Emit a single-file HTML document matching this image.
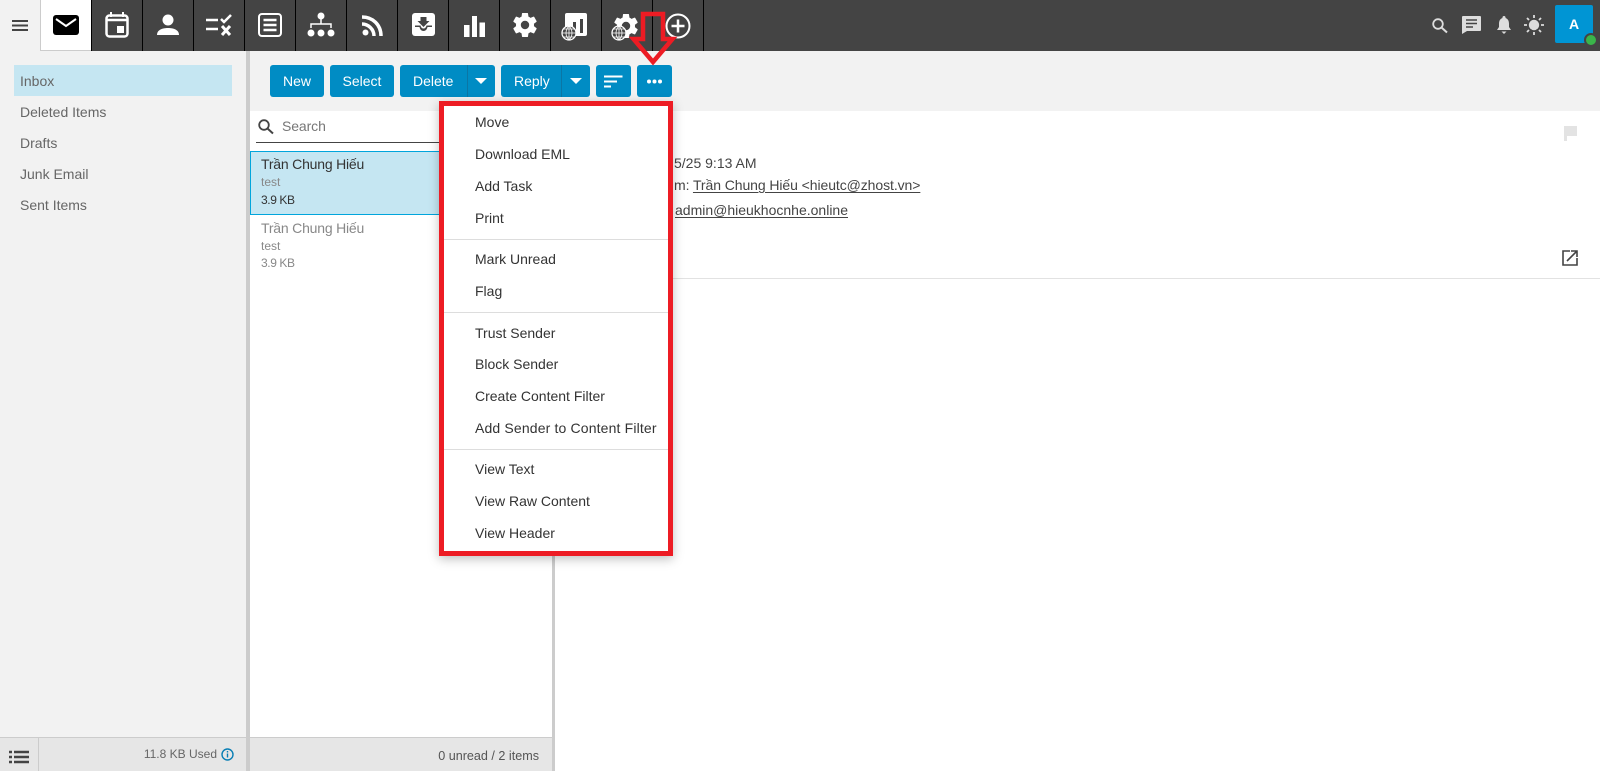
<!DOCTYPE html>
<html lang="vi"><head><meta charset="utf-8"><title>Mail</title>
<style>
html,body{margin:0;padding:0;width:1600px;height:771px;overflow:hidden;background:#f2f2f2}
body{font-family:"Liberation Sans","Noto Sans CJK SC",sans-serif;font-size:14px;color:#444;position:relative}
.a{position:absolute;white-space:nowrap}
.t{position:absolute;white-space:nowrap;height:20px;line-height:20px}
.sep{position:absolute;top:0;width:1px;height:51px;background:#000}
.btn{position:absolute;top:65px;height:32px;line-height:32px;background:#008cc4;color:#fff;border-radius:3px;text-align:center}
.mi{position:absolute;left:475px;height:20px;line-height:20px;color:#333;white-space:nowrap}
.md{position:absolute;left:444px;width:224px;height:1px;background:#ddd}
svg{position:absolute;overflow:visible}
u{text-underline-offset:2px}
</style></head><body>

<!-- top bar -->
<div class="a" style="left:0;top:0;width:1600px;height:51px;background:#444"></div>
<div class="a" style="left:0;top:0;width:40px;height:51px;background:#f2f2f2"></div>
<div class="a" style="left:40px;top:0;width:50px;height:50px;background:#fff;border-left:1px solid #ccc;border-bottom:1px solid #ccc"></div>
<svg style="left:12px;top:20px" width="16" height="11"><path d="M0 1h16M0 5.500h16M0 10h16" stroke="#444" stroke-width="2"/></svg>
<div class="sep" style="left:91px"></div><div class="sep" style="left:142px"></div><div class="sep" style="left:193px"></div><div class="sep" style="left:244px"></div><div class="sep" style="left:295px"></div><div class="sep" style="left:346px"></div><div class="sep" style="left:397px"></div><div class="sep" style="left:448px"></div><div class="sep" style="left:499px"></div><div class="sep" style="left:550px"></div><div class="sep" style="left:601px"></div><div class="sep" style="left:652px"></div><div class="sep" style="left:703px"></div>

<!-- mail -->
<svg style="left:53px;top:15px" width="26" height="20"><rect width="26" height="20" rx="3" fill="#000"/><path d="M3 4l10 7 10-7" fill="none" stroke="#fff" stroke-width="2"/></svg>
<!-- calendar -->
<svg style="left:105px;top:12px" width="24" height="26"><path d="M6 0v5M18 0v5" stroke="#fff" stroke-width="2"/><rect x="1.500" y="3.500" width="21" height="21" rx="3" fill="none" stroke="#fff" stroke-width="2.500"/><path d="M1.500 8h21" stroke="#fff" stroke-width="2.500"/><rect x="12" y="14" width="7" height="7" fill="#fff"/></svg>
<!-- person -->
<svg style="left:157px;top:14px" width="22" height="22"><circle cx="11" cy="6" r="5.500" fill="#fff"/><path d="M0 21c0-5 5-7 11-7s11 2 11 7z" fill="#fff"/></svg>
<!-- tasks -->
<svg style="left:206px;top:15px" width="27" height="21" fill="none" stroke="#fff"><path d="M0 5h12M0 14h12" stroke-width="2.500"/><path d="M15 4l3 3 7-7" stroke-width="2.500"/><path d="M16 11l8 9M24 11l-8 9" stroke-width="3"/></svg>
<!-- notes -->
<svg style="left:258px;top:13px" width="24" height="24" fill="none" stroke="#fff"><rect x="1" y="1" width="22" height="22" rx="3" stroke-width="2"/><path d="M5.500 7h13M5.500 12h13M5.500 17h13" stroke-width="2.500"/></svg>
<!-- org -->
<svg style="left:307px;top:12px" width="28" height="26" fill="#fff"><circle cx="14" cy="4" r="3.500"/><circle cx="4" cy="21" r="3.500"/><circle cx="14" cy="21" r="3.500"/><circle cx="24" cy="21" r="3.500"/><path d="M14 7v5M4 16v-4h20v4" fill="none" stroke="#fff" stroke-width="1.500"/></svg>
<!-- rss -->
<svg style="left:362px;top:15px" width="21" height="21" fill="none" stroke="#fff" stroke-width="3.500"><circle cx="3.500" cy="17.500" r="3" fill="#fff" stroke="none"/><path d="M0 9c6 0 12 5 12 12"/><path d="M0 2c11 0 19 8 19 19"/></svg>
<!-- download tray -->
<svg style="left:412px;top:13px" width="23" height="23"><rect width="23" height="23" rx="3" fill="#fff"/><path d="M3 14h5c0 2 2 3.500 3.500 3.500S15 16 15 14h5v6H3z" fill="#fff"/><path d="M3 14h4.500c.5 2.500 2 4 4 4s3.500-1.500 4-4H20v-1.500h-5.500c-.5 2-1.500 3-3 3s-2.500-1-3-3H3z" fill="#444"/><path d="M8.500 4h6v4h3l-6 6-6-6h3z" fill="#444"/></svg>
<!-- chart -->
<svg style="left:464px;top:16px" width="21" height="21" fill="#fff"><rect x="0" y="9" width="5.500" height="12"/><rect x="8" y="0" width="5" height="21"/><rect x="15.500" y="6.500" width="5.500" height="14.500"/></svg>
<!-- gear -->
<svg style="left:513px;top:13px" width="24" height="24" viewBox="2 2 20 20"><path fill="#fff" fill-rule="evenodd" d="M12,15.500A3.500,3.500 0 0,1 8.500,12A3.500,3.500 0 0,1 12,8.500A3.500,3.500 0 0,1 15.500,12A3.500,3.500 0 0,1 12,15.500M19.430,12.970C19.470,12.650 19.500,12.330 19.500,12C19.500,11.670 19.470,11.340 19.430,11L21.540,9.370C21.730,9.220 21.780,8.950 21.660,8.730L19.660,5.270C19.540,5.050 19.270,4.960 19.050,5.050L16.560,6.050C16.040,5.660 15.500,5.320 14.870,5.070L14.500,2.420C14.460,2.180 14.250,2 14,2H10C9.750,2 9.540,2.180 9.500,2.420L9.130,5.070C8.500,5.320 7.960,5.660 7.440,6.050L4.950,5.050C4.730,4.960 4.460,5.050 4.340,5.270L2.340,8.730C2.210,8.950 2.270,9.220 2.460,9.370L4.570,11C4.530,11.340 4.500,11.670 4.500,12C4.500,12.330 4.530,12.650 4.570,12.970L2.460,14.630C2.270,14.780 2.210,15.050 2.340,15.270L4.340,18.730C4.460,18.950 4.730,19.030 4.950,18.950L7.440,17.940C7.960,18.340 8.500,18.680 9.130,18.930L9.500,21.580C9.540,21.820 9.750,22 10,22H14C14.250,22 14.460,21.820 14.500,21.580L14.870,18.930C15.500,18.670 16.040,18.340 16.560,17.940L19.050,18.950C19.270,19.030 19.540,18.950 19.660,18.730L21.660,15.270C21.780,15.050 21.730,14.780 21.540,14.630L19.430,12.970Z"/></svg>
<!-- report + globe -->
<svg style="left:561px;top:13px" width="30" height="28"><rect x="4" y="0" width="22" height="23" rx="2" fill="#fff"/><path d="M12 9h3v11h-3zM19 6h3v14h-3z" fill="#444"/><circle cx="8" cy="20" r="7" fill="#444" stroke="#fff" stroke-width="1.300"/><path d="M1 20h14M8 13v14M2.500 16h11M2.500 24h11M8 13c-4 4-4 10 0 14M8 13c4 4 4 10 0 14" fill="none" stroke="#fff" stroke-width=".8"/></svg>
<!-- gear + globe -->
<svg style="left:614px;top:14px" width="24" height="24" viewBox="2 2 20 20"><path fill="#fff" fill-rule="evenodd" d="M12,15.500A3.500,3.500 0 0,1 8.500,12A3.500,3.500 0 0,1 12,8.500A3.500,3.500 0 0,1 15.500,12A3.500,3.500 0 0,1 12,15.500M19.430,12.970C19.470,12.650 19.500,12.330 19.500,12C19.500,11.670 19.470,11.340 19.430,11L21.540,9.370C21.730,9.220 21.780,8.950 21.660,8.730L19.660,5.270C19.540,5.050 19.270,4.960 19.050,5.050L16.560,6.050C16.040,5.660 15.500,5.320 14.870,5.070L14.500,2.420C14.460,2.180 14.250,2 14,2H10C9.750,2 9.540,2.180 9.500,2.420L9.130,5.070C8.500,5.320 7.960,5.660 7.440,6.050L4.950,5.050C4.730,4.960 4.460,5.050 4.340,5.270L2.340,8.730C2.210,8.950 2.270,9.220 2.460,9.370L4.570,11C4.530,11.340 4.500,11.670 4.500,12C4.500,12.330 4.530,12.650 4.570,12.970L2.460,14.630C2.270,14.780 2.210,15.050 2.340,15.270L4.340,18.730C4.460,18.950 4.730,19.030 4.950,18.950L7.440,17.940C7.960,18.340 8.500,18.680 9.130,18.930L9.500,21.580C9.540,21.820 9.750,22 10,22H14C14.250,22 14.460,21.820 14.500,21.580L14.870,18.930C15.500,18.670 16.040,18.340 16.560,17.940L19.050,18.950C19.270,19.030 19.540,18.950 19.660,18.730L21.660,15.270C21.780,15.050 21.730,14.780 21.540,14.630L19.430,12.970Z"/></svg>
<svg style="left:611px;top:13px" width="16" height="28"><circle cx="8" cy="20" r="7" fill="#444" stroke="#fff" stroke-width="1.300"/><path d="M1 20h14M8 13v14M2.500 16h11M2.500 24h11M8 13c-4 4-4 10 0 14M8 13c4 4 4 10 0 14" fill="none" stroke="#fff" stroke-width=".8"/></svg>
<!-- plus -->
<svg style="left:665px;top:13px" width="26" height="26" fill="none" stroke="#fff"><circle cx="13" cy="13" r="11.500" stroke-width="2"/><path d="M13 6.500v13M6.500 13h13" stroke-width="2.500"/></svg>

<!-- top right -->
<svg style="left:1432px;top:18px" width="16" height="16" fill="none" stroke="#ddd"><circle cx="6" cy="6" r="4.800" stroke-width="1.800"/><path d="M9.500 9.500l5.500 5" stroke-width="2"/></svg>
<svg style="left:1462px;top:16px" width="19" height="18"><path d="M0 1a1 1 0 0 1 1-1h17a1 1 0 0 1 1 1v13a1 1 0 0 1-1 1H5l-5 3z" fill="#ddd"/><path d="M4 4h11M4 7.500h11M4 11h7" stroke="#444" stroke-width="1.500"/></svg>
<svg style="left:1497px;top:16px" width="14" height="18"><path d="M7 0a1.500 1.500 0 0 1 1.500 2c2.500.8 3.500 3 3.500 6v3l2 3H0l2-3V8c0-3 1-5.200 3.500-6A1.500 1.500 0 0 1 7 0z" fill="#ddd"/><path d="M4.500 15.500h5L7 18z" fill="#ddd"/></svg>
<svg style="left:1524px;top:15px" width="20" height="20"><circle cx="10" cy="10" r="5.200" fill="#ddd"/><path d="M10 0v3M10 17v3M0 10h3M17 10h3M3 3l2 2M15 15l2 2M3 17l2-2M15 5l2-2" stroke="#ddd" stroke-width="1.800"/></svg>
<div class="a" style="left:1555px;top:5px;width:38px;height:38px;background:#0095d4;border-radius:2px;color:#fff;font-weight:bold;font-size:14px;line-height:38px;text-align:center">A</div>
<div class="a" style="left:1584px;top:33px;width:10px;height:10px;background:#3ab54a;border:2px solid #444;border-radius:50%"></div>

<!-- sidebar -->
<div class="a" style="left:14px;top:65px;width:218px;height:31px;background:#c5e6f2"></div>
<div class="t" style="left:20px;top:71px;color:#666">Inbox</div>
<div class="t" style="left:20px;top:102px;color:#666">Deleted Items</div>
<div class="t" style="left:20px;top:133px;color:#666">Drafts</div>
<div class="t" style="left:20px;top:164px;color:#666">Junk Email</div>
<div class="t" style="left:20px;top:195px;color:#666">Sent Items</div>
<div class="a" style="left:246px;top:51px;width:4px;height:720px;background:#ccc"></div>

<!-- toolbar -->
<div class="btn" style="left:270px;width:54px">New</div>
<div class="btn" style="left:330px;width:64px">Select</div>
<div class="btn" style="left:400px;width:95px;text-align:left;text-indent:13px">Delete</div>
<div class="a" style="left:467px;top:65px;width:1px;height:32px;background:#0b76a5"></div>
<svg style="left:475px;top:78px" width="12" height="6"><path d="M0 0h12L6 6z" fill="#fff"/></svg>
<div class="btn" style="left:501px;width:89px;text-align:left;text-indent:13px">Reply</div>
<div class="a" style="left:561px;top:65px;width:1px;height:32px;background:#0b76a5"></div>
<svg style="left:570px;top:78px" width="12" height="6"><path d="M0 0h12L6 6z" fill="#fff"/></svg>
<div class="btn" style="left:596px;width:35px"></div>
<svg style="left:604px;top:75px" width="19" height="13"><path d="M0 1.500h18.500M0 6.500h13M0 11.500h7" stroke="#fff" stroke-width="2"/></svg>
<div class="btn" style="left:637px;width:35px"></div>
<svg style="left:647px;top:79px" width="15" height="5" fill="#fff"><circle cx="2" cy="2.500" r="2"/><circle cx="7.500" cy="2.500" r="2"/><circle cx="13" cy="2.500" r="2"/></svg>

<!-- list panel -->
<div class="a" style="left:250px;top:111px;width:302px;height:626px;background:#fff"></div>
<svg style="left:258px;top:119px" width="16" height="16" fill="none" stroke="#444"><circle cx="6" cy="6" r="4.800" stroke-width="1.800"/><path d="M9.500 9.500l5.500 5" stroke-width="2"/></svg>
<div class="t" style="left:282px;top:116px;color:#777;letter-spacing:-.1px">Search</div>
<div class="a" style="left:256px;top:142px;width:290px;height:1px;background:#444"></div>
<div class="a" style="left:250px;top:151px;width:301px;height:62px;background:#c5e6f2;border:1px solid #00a5dc"></div>
<div class="t" style="left:261px;top:154px;color:#333;letter-spacing:-.2px">Trần Chung Hiếu</div>
<div class="t" style="left:261px;top:172px;font-size:12px;color:#888">test</div>
<div class="t" style="left:261px;top:190px;font-size:12px;color:#333;letter-spacing:-.4px">3.9 KB</div>
<div class="t" style="left:261px;top:218px;color:#888;letter-spacing:-.2px">Trần Chung Hiếu</div>
<div class="t" style="left:261px;top:236px;font-size:12px;color:#888">test</div>
<div class="t" style="left:261px;top:253px;font-size:12px;color:#888;letter-spacing:-.4px">3.9 KB</div>

<!-- reading pane -->
<div class="a" style="left:555px;top:111px;width:1045px;height:660px;background:#fff"></div>
<div class="a" style="left:552px;top:111px;width:3px;height:660px;background:#ccc"></div>
<div class="t" style="left:674px;top:153px;color:#444">5/25 9:13 AM</div>
<div class="t" style="left:674px;top:175px;color:#444;letter-spacing:-.08px">m: <u>Trần Chung Hiếu &lt;hieutc@zhost.vn&gt;</u></div>
<div class="t" style="left:675px;top:200px;color:#444"><u>admin@hieukhocnhe.online</u></div>
<svg style="left:1564px;top:126px" width="14" height="15"><path d="M0 0h13v10H3v5H0z" fill="#e3e3e3"/></svg>
<svg style="left:1562px;top:250px" width="16" height="16" fill="none" stroke="#444" stroke-width="1.600"><path d="M8 1H1v14h14V8"/><path d="M5 11L15 1M9 1h6v6"/></svg>
<div class="a" style="left:555px;top:278px;width:1045px;height:1px;background:#e2e2e2"></div>

<!-- bottom bar -->
<div class="a" style="left:0;top:737px;width:552px;height:34px;background:#e6e6e6;border-top:1px solid #ccc;box-sizing:border-box"></div>
<div class="a" style="left:246px;top:737px;width:4px;height:34px;background:#ccc"></div>
<div class="a" style="left:38px;top:737px;width:1px;height:34px;background:#ccc"></div>
<svg style="left:9px;top:751px" width="20" height="12"><path d="M0 1h3M5 1h15M0 6h3M5 6h15M0 11h3M5 11h15" stroke="#444" stroke-width="2.400"/></svg>
<div class="t" style="right:1383px;top:744px;font-size:12px;color:#666">11.8 KB Used</div>
<svg style="left:221px;top:748px" width="13" height="13" fill="none" stroke="#0a7fb5"><circle cx="6.500" cy="6.500" r="5.500" stroke-width="1.400"/><path d="M6.500 5.500v4M6.500 3v1.500" stroke-width="1.400"/></svg>
<div class="t" style="right:1061px;top:746px;font-size:12.600px;color:#555">0 unread / 2 items</div>

<!-- menu -->
<div class="a" style="left:439px;top:101px;width:224px;height:445px;background:#fff;border:5px solid #ed1c24;box-shadow:0 3px 10px rgba(0,0,0,.25)"></div>
<div class="mi" style="top:112px">Move</div>
<div class="mi" style="top:144px">Download EML</div>
<div class="mi" style="top:176px">Add Task</div>
<div class="mi" style="top:208px">Print</div>
<div class="md" style="top:239px"></div>
<div class="mi" style="top:249px">Mark Unread</div>
<div class="mi" style="top:281px">Flag</div>
<div class="md" style="top:312px"></div>
<div class="mi" style="top:323px">Trust Sender</div>
<div class="mi" style="top:354px">Block Sender</div>
<div class="mi" style="top:386px">Create Content Filter</div>
<div class="mi" style="top:418px;letter-spacing:.15px">Add Sender to Content Filter</div>
<div class="md" style="top:449px"></div>
<div class="mi" style="top:459px">View Text</div>
<div class="mi" style="top:491px">View Raw Content</div>
<div class="mi" style="top:523px">View Header</div>

<!-- red arrow -->
<svg style="left:630px;top:10px" width="46" height="58"><path d="M13 4h20v25h9.500L23 52 3.500 29H13z" fill="none" stroke="#ed1c24" stroke-width="4.500"/></svg>
</body></html>
